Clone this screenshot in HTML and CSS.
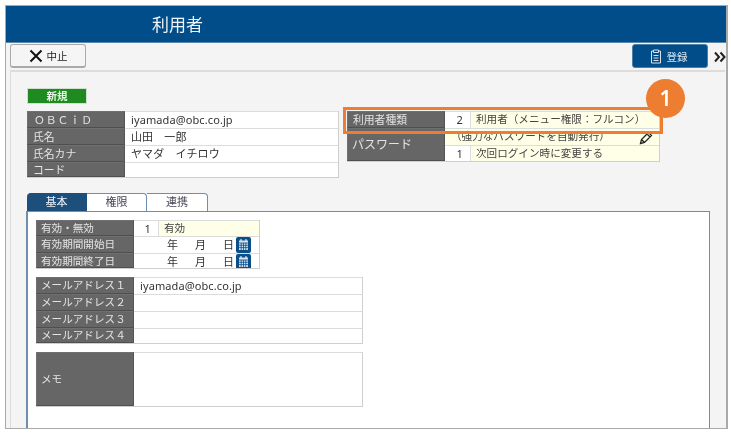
FILE: index.html
```html
<!DOCTYPE html>
<html lang="ja">
<head>
<meta charset="utf-8">
<title>利用者</title>
<link rel="stylesheet" href="styles.css">
</head>
<body>
<div class="window">
  <header class="title"><h1>利用者</h1></header>
  <div class="toolbar">
    <button class="btn btn-cancel">
      <svg class="ic-x" viewBox="0 0 14 14"><path d="M1.500 1.500 12.500 12.500M12.500 1.500 1.500 12.500"/></svg>
      <span>中止</span>
    </button>
    <div class="toolbar-right">
      <button class="btn btn-save">
        <svg class="ic-clip" viewBox="0 0 12 15"><path d="M3.500 2H1.500v12h9V2H8.500M3.500 1h5v2.500h-5zM3.500 6.500h5M3.500 9h5M3.500 11.500h5"/></svg>
        <span>登録</span>
      </button>
      <svg class="more" viewBox="0 0 12 12"><path d="M1 1.500 5 6 1 10.500M6.500 1.500 10.500 6 6.500 10.500"/></svg>
    </div>
  </div>
  <main class="panel">
    <div class="status">新規</div>
    <div class="top-row">
      <div class="form form-id">
        <div class="label label-wide">ＯＢＣｉＤ</div><div class="cell">iyamada@obc.co.jp</div>
        <div class="label">氏名</div><div class="cell">山田　一郎</div>
        <div class="label">氏名カナ</div><div class="cell">ヤマダ　イチロウ</div>
        <div class="label">コード</div><div class="cell"></div>
      </div>
      <div class="form form-user">
        <div class="label">利用者種類</div><div class="cell num">2</div><div class="cell note">利用者（メニュー権限：フルコン）</div>
        <div class="label label-tall">パスワード</div>
        <div class="cell note note-wide"><span>（強力なパスワードを自動発行）</span>
          <svg class="ic-pen" viewBox="0 0 14 14"><path d="M1.500 12.500 2.500 8.500 9.500 1.500 12.500 4.500 5.500 11.500zM8 3 11 6M2.500 8.500 5.500 11.500"/></svg>
        </div>
        <div class="cell num">1</div><div class="cell note">次回ログイン時に変更する</div>
      </div>
    </div>
    <nav class="tabs">
      <div class="tab tab-on">基本</div>
      <div class="tab">権限</div>
      <div class="tab">連携</div>
    </nav>
    <section class="tab-body">
      <div class="form form-valid">
        <div class="label">有効・無効</div><div class="cell num">1</div><div class="cell note">有効</div>
        <div class="label">有効期間開始日</div>
        <div class="cell date"><span>年</span><span>月</span><span>日</span>
          <svg class="ic-cal" viewBox="0 0 15 16"><rect width="15" height="16" rx="2" fill="#0b4f8a"/><path d="M3 3.500h9v9.500H3z" fill="#cfe0f0"/><path d="M3 6h9M3 8.300h9M3 10.600h9M5.200 6v7M7.500 6v7M9.800 6v7" stroke="#0b4f8a" stroke-width=".8"/><path d="M5 2v2.500M10 2v2.500" stroke="#fff"/></svg>
        </div>
        <div class="label">有効期間終了日</div>
        <div class="cell date"><span>年</span><span>月</span><span>日</span>
          <svg class="ic-cal" viewBox="0 0 15 16"><rect width="15" height="16" rx="2" fill="#0b4f8a"/><path d="M3 3.500h9v9.500H3z" fill="#cfe0f0"/><path d="M3 6h9M3 8.300h9M3 10.600h9M5.200 6v7M7.500 6v7M9.800 6v7" stroke="#0b4f8a" stroke-width=".8"/><path d="M5 2v2.500M10 2v2.500" stroke="#fff"/></svg>
        </div>
      </div>
      <div class="form form-mail">
        <div class="label">メールアドレス１</div><div class="cell">iyamada@obc.co.jp</div>
        <div class="label">メールアドレス２</div><div class="cell"></div>
        <div class="label">メールアドレス３</div><div class="cell"></div>
        <div class="label">メールアドレス４</div><div class="cell"></div>
      </div>
      <div class="form form-memo">
        <div class="label label-memo">メモ</div><div class="cell"></div>
      </div>
    </section>
    <div class="callout-box"></div>
    <div class="callout-num">1</div>
  </main>
</div>
</body>
</html>
```
FILE: styles.css
```css
* { box-sizing: border-box; }
html, body { margin: 0; padding: 0; background: #fff; }
body {
  width: 731px; height: 433px; overflow: hidden;
  font-family: "Noto Sans", "Noto Sans CJK JP", sans-serif;
  font-size: 11px; color: #333;
}
.window {
  margin: 5px 0 0 5px; width: 723px; height: 424px;
  border: 1px solid #a9a9a9; border-width: 1px 2px 1px 1px;
  background: #f4f4f4; display: flex; flex-direction: column;
  filter: blur(.3px);
}
.title {
  height: 37px; flex: none; background: #004d89; color: #eef3f8;
  display: flex; align-items: center; padding-left: 146px;
  border-bottom: 1px solid #5d87ab;
}
.title h1 { margin: 0; font-size: 17px; font-weight: 400; line-height: 1; }
.toolbar {
  height: 27px; flex: none; display: flex; justify-content: space-between;
  padding: 1px 0 0 4px; align-items: flex-start;
}
.toolbar-right { display: flex; align-items: flex-start; }
.btn {
  width: 76px; height: 24px; font: inherit; font-size: 10.500px; border-radius: 3px;
  display: flex; align-items: center; justify-content: center; gap: 4px; padding: 0;
}
.btn-cancel { background: #f5f5f5; border: 1px solid #aaa; border-bottom-width: 2px; color: #222; }
.btn-save { background: #004d89; border: 1px solid #4d7ea6; color: #d7e3ee; gap: 5px; padding-right: 3px; }
.ic-x { width: 14px; height: 14px; fill: none; stroke: #111; stroke-width: 2; }
.ic-clip { width: 12px; height: 15px; fill: none; stroke: #d7e3ee; stroke-width: 1; }
.more { width: 12px; height: 12px; margin: 7px 0 0 6px; fill: none; stroke: #222; stroke-width: 2; }
.panel {
  position: relative; flex: 1; margin-left: 4px; margin-right: 1px;
  border-top: 2px solid #dcdcdc; border-left: 1px solid #dcdcdc;
  padding: 16px 0 0 16px; display: flex; flex-direction: column; min-height: 0;
}
.status {
  width: 60px; height: 16px; background: #1f8a1f; color: #e9f5e9; border: 1px solid #cfe0cf;
  font-size: 10.500px; font-weight: 600; line-height: 14px; text-align: center; flex: none;
}
.top-row { display: flex; gap: 8px; margin-top: 7px; flex: none; }
.form { display: grid; background: #fff; border: 1px solid #cfcfcf; border-left: 0; border-top: 0; }
.form-id { width: 312px; height: 67px; grid-template-columns: 98px 1fr; grid-template-rows: 17px 17px 17px 15px; }
.form-user { width: 313px; height: 51px; grid-template-columns: 98px 26px 1fr; grid-template-rows: 17px 17px 16px; }
.label {
  background: #666; color: #e4e4e4; padding-left: 5px; line-height: 15px;
  border: 1px solid #555; border-color: #6f6f6f #555 #4f4f4f #6f6f6f;
  font-size: 10.800px; white-space: nowrap; overflow: hidden;
}
.form-id > .label:nth-last-child(2), .form-mail > .label:nth-last-child(2) { line-height: 13px; }
.label-wide { letter-spacing: 1px; padding-left: 6px; }
.label-tall { grid-row: span 2; line-height: 31px; font-size: 12px; padding-left: 4px; }
.tab-body .label { font-size: 10.600px; padding-left: 4px; }
.label-memo { line-height: 53px; }
.cell {
  border-top: 1px solid #dcdcdc; padding-left: 6px; line-height: 15px;
  background: #fff; white-space: nowrap; overflow: hidden; min-width: 0;
  letter-spacing: .1px;
}
.num { text-align: right; padding: 0 7px 0 0; border-right: 1px solid #ddd; }
.note { background: #fffee6; color: #444; padding-left: 5px; font-size: 10.600px; letter-spacing: 0; }
.note-wide { grid-column: span 2; padding-left: 6px; display: flex; justify-content: space-between; padding-right: 6px; }
.ic-pen { width: 14px; height: 14px; fill: none; stroke: #222; stroke-width: 1.300; flex: none; margin-top: 2px; }
.tabs { display: flex; margin-top: 15px; flex: none; height: 18px; }
.tab {
  width: 60px; height: 18px; background: #fff; color: #445; border: 1px solid #6d8fae; border-bottom: 0; border-left: 0;
  border-radius: 0 4px 0 0; text-align: center; line-height: 16px;
}
.tab:last-child { width: 61px; }
.tab-on { background: #1d4f7c; color: #eef3f8; border-color: #1d4f7c; border-radius: 4px 0 0 0; }
.tab-body {
  flex: 1; margin-left: -1px; margin-right: 15px; background: #fff;
  border: 1px solid #6d8fae; border-left-width: 2px; border-bottom: 0;
  padding: 8px 0 0 8px; display: flex; flex-direction: column; gap: 8px; min-height: 0;
}
.form-valid { width: 224px; height: 49px; grid-template-columns: 98px 25px 1fr; grid-template-rows: 16px 17px 15px; }
.form-valid > .label:first-child { line-height: 14px; }
.date { grid-column: span 2; display: flex; align-items: flex-start; padding-left: 33px; position: relative; }
.date span { width: 28px; }
.ic-cal { position: absolute; left: 102px; top: 0; width: 15px; height: 16px; }
.form-mail { width: 327px; height: 67px; grid-template-columns: 98px 1fr; grid-template-rows: 17px 17px 17px 15px; }
.form-memo { width: 327px; height: 55px; grid-template-columns: 98px 1fr; grid-template-rows: 54px; }
.callout-box {
  position: absolute; left: 332px; top: 35px; width: 320px; height: 27px;
  border: 3px solid #ed7d31;
}
.callout-num {
  position: absolute; left: 635px; top: 7px; width: 39px; height: 39px; border-radius: 50%;
  background: #ed7d31; color: #fff; font-size: 21px; font-weight: 600; line-height: 39px; text-align: center;
}
```
